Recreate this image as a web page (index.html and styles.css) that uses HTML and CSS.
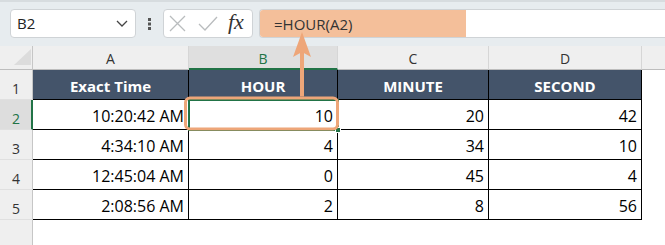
FILE: index.html
```html
<!DOCTYPE html>
<html>
<head>
<meta charset="utf-8">
<link rel="stylesheet" href="styles.css">
</head>
<body>
<div class="toolbar">
  <div class="namebox">
    <span class="ref">B2</span>
    <svg class="chev" width="12" height="7" viewBox="0 0 12 7"><path d="M1 1 L6 6 L11 1" fill="none" stroke="#444" stroke-width="1.3"/></svg>
  </div>
  <div class="grip">
    <svg width="3" height="12" viewBox="0 0 3 12"><rect x="0" y="0" width="3" height="3" fill="#555"/><rect x="0" y="4.5" width="3" height="3" fill="#555"/><rect x="0" y="9" width="3" height="3" fill="#555"/></svg>
  </div>
  <div class="fnbox">
    <svg class="ic-x" width="17" height="17" viewBox="0 0 17 17"><path d="M1 1 L16 16 M16 1 L1 16" stroke="#b9bcbe" stroke-width="1.3" fill="none"/></svg>
    <svg class="ic-ok" width="20" height="15" viewBox="0 0 20 15"><path d="M1 8 L7 14 L19 1" stroke="#b9bcbe" stroke-width="1.3" fill="none"/></svg>
    <span class="fx">fx</span>
  </div>
  <div class="formula">
    <div class="hl">=HOUR(A2)</div>
  </div>
</div>

<div class="grid">
  <div class="corner"><svg width="18" height="17" viewBox="0 0 18 17"><path d="M17 0 L17 16 L0 16 Z" fill="#dcdcdc"/></svg></div>
  <div class="ch">A</div>
  <div class="ch sel">B</div>
  <div class="ch">C</div>
  <div class="ch">D</div>
  <div class="ch last"></div>

  <div class="rh">1</div>
  <div class="th">Exact Time</div>
  <div class="th">HOUR</div>
  <div class="th">MINUTE</div>
  <div class="th">SECOND</div>
  <div class="blank"></div>

  <div class="rh sel">2</div>
  <div class="td">10:20:42 AM</div>
  <div class="td">10</div>
  <div class="td">20</div>
  <div class="td">42</div>
  <div class="blank"></div>

  <div class="rh">3</div>
  <div class="td">4:34:10 AM</div>
  <div class="td">4</div>
  <div class="td">34</div>
  <div class="td">10</div>
  <div class="blank"></div>

  <div class="rh">4</div>
  <div class="td">12:45:04 AM</div>
  <div class="td">0</div>
  <div class="td">45</div>
  <div class="td">4</div>
  <div class="blank"></div>

  <div class="rh">5</div>
  <div class="td">2:08:56 AM</div>
  <div class="td">2</div>
  <div class="td">8</div>
  <div class="td">56</div>
  <div class="blank"></div>

  <div class="rh end"></div>
  <div class="blank"></div>
  <div class="blank"></div>
  <div class="blank"></div>
  <div class="blank"></div>
  <div class="blank"></div>
</div>

<div class="selection"><div class="handle"></div></div>

<svg class="callout" width="665" height="245" viewBox="0 0 665 245">
  <rect x="185.5" y="98" width="152" height="31" rx="4.5" fill="none" stroke="#eea679" stroke-width="3"/>
  <line x1="302" y1="96.5" x2="302" y2="50" stroke="#eea679" stroke-width="4"/>
  <path d="M302 32 L311 57 L302 52 L293 57 Z" fill="#eea679"/>
</svg>
</body>
</html>
```

FILE: styles.css
```css
* { box-sizing: border-box; }
html, body {
  margin: 0;
  padding: 0;
}
body {
  width: 665px;
  height: 245px;
  overflow: hidden;
  background: #fff;
  font-family: "Open Sans", "Noto Sans", sans-serif;
  position: relative;
}

.toolbar {
  height: 46px;
  background: #e7ecef;
  border-top: 2px solid #d7dcdf;
  display: flex;
  align-items: flex-start;
  padding-top: 7px;
}

.namebox {
  margin-left: 10px;
  width: 126px;
  height: 29px;
  background: #fff;
  border: 1px solid #cfd3d6;
  border-radius: 4px;
  display: flex;
  align-items: center;
  justify-content: space-between;
  padding: 0 7px 0 6px;
}
.ref {
  font-size: 15px;
  color: #222;
  line-height: 1;
}

.grip {
  width: 27px;
  height: 29px;
  display: flex;
  align-items: center;
  justify-content: center;
}

.fnbox {
  width: 90px;
  height: 29px;
  background: #fff;
  border: 1px solid #cfd3d6;
  border-radius: 4px;
  display: flex;
  align-items: center;
  padding-left: 5px;
}
.ic-x { margin-right: 12px; }
.ic-ok { margin-right: 10px; }
.fx {
  font-family: "Liberation Serif", "DejaVu Serif", serif;
  font-style: italic;
  font-size: 22px;
  color: #333;
  line-height: 1;
  padding-bottom: 3px;
}

.formula {
  margin-left: 6px;
  flex: 1;
  height: 29px;
  background: #fff;
  border: 1px solid #cfd3d6;
  border-right: none;
  border-radius: 4px 0 0 4px;
  overflow: hidden;
}
.hl {
  width: 206px;
  height: 100%;
  background: #f4bf9a;
  padding-left: 14px;
  font-size: 15px;
  color: #333;
  display: flex;
  align-items: center;
}

.grid {
  display: grid;
  grid-template-columns: 33px 156px 149px 151px 153px 1fr;
  grid-template-rows: 24px repeat(5, 30px) 1fr;
  height: 199px;
}

.corner {
  background: #efefef;
  border-right: 1px solid #c6c6c6;
  border-bottom: 1px solid #bdbdbd;
  display: flex;
  align-items: flex-end;
  justify-content: flex-end;
  padding: 0 0 3px 0;
}

.ch {
  background: #efefef;
  border-right: 1px solid #d6d6d6;
  border-bottom: 1px solid #bdbdbd;
  font-size: 14px;
  color: #333;
  display: flex;
  justify-content: center;
  align-items: flex-end;
  padding-bottom: 1px;
}
.ch.sel {
  background: #dfdfdf;
  color: #217346;
  border-bottom: 2px solid #217346;
  padding-bottom: 0;
}
.ch.last { border-right: none; }

.rh {
  background: #efefef;
  border-right: 1px solid #c6c6c6;
  border-bottom: 1px solid #e0e0e0;
  font-size: 14px;
  color: #333;
  display: flex;
  justify-content: center;
  align-items: flex-end;
  padding-bottom: 1px;
}
.rh.sel {
  background: #dddddd;
  color: #217346;
  border-right: 2px solid #217346;
  padding-left: 1px;
}
.rh.end { border-bottom: none; }

.th {
  background: #44546a;
  color: #fff;
  font-weight: 700;
  font-size: 15px;
  border-right: 1px solid #000;
  border-bottom: 1px solid #000;
  display: flex;
  align-items: center;
  justify-content: center;
  padding-top: 2px;
}

.td {
  background: #fff;
  color: #000;
  font-size: 16px;
  border-right: 1px solid #000;
  border-bottom: 1px solid #000;
  display: flex;
  align-items: center;
  justify-content: flex-end;
  padding: 3px 4px 0 0;
}

.blank { background: #fff; }

.selection {
  position: absolute;
  left: 188px;
  top: 99px;
  width: 151px;
  height: 32px;
  border: 2px solid #217346;
}
.handle {
  position: absolute;
  right: -4px;
  bottom: -4px;
  width: 6px;
  height: 6px;
  background: #217346;
  border: 1px solid #fff;
}

.callout {
  position: absolute;
  left: 0;
  top: 0;
  pointer-events: none;
}
```
